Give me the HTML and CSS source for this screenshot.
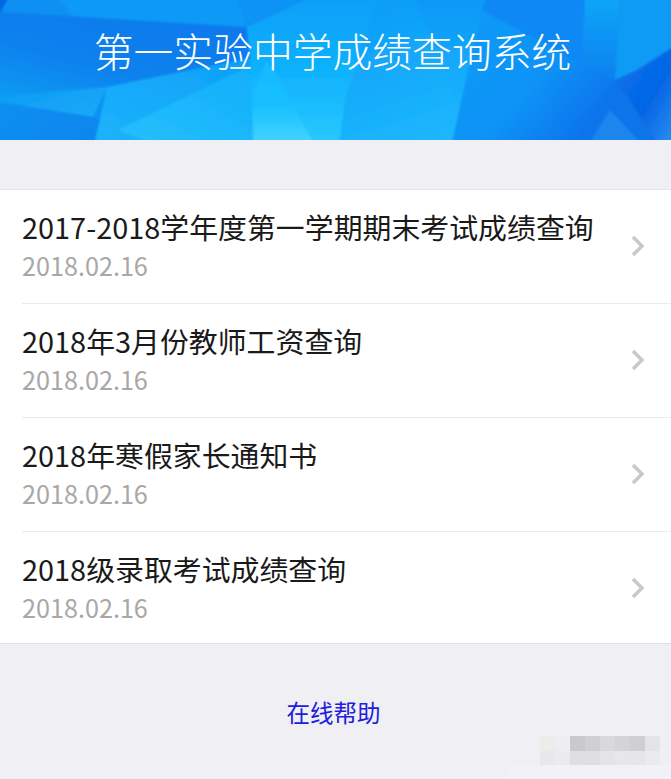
FILE: index.html
```html
<!DOCTYPE html>
<html lang="zh-CN">
<head>
<meta charset="utf-8">
<title>第一实验中学成绩查询系统</title>
<link rel="stylesheet" href="styles.css">
</head>
<body>
<header class="banner">
  <svg class="banner-art" viewBox="0 0 671 140" preserveAspectRatio="none" aria-hidden="true">
    <defs>
      <linearGradient id="base" x1="0" y1="0" x2="1" y2="0">
        <stop offset="0" stop-color="#0a86ee"/>
        <stop offset="0.45" stop-color="#0ea8fb"/>
        <stop offset="1" stop-color="#0670ea"/>
      </linearGradient>
      <linearGradient id="topband" x1="0" y1="0" x2="1" y2="0">
        <stop offset="0" stop-color="#0a90f2"/>
        <stop offset="1" stop-color="#0a93f5"/>
      </linearGradient>
      <linearGradient id="dark" x1="0.8" y1="0" x2="0" y2="1">
        <stop offset="0" stop-color="#0878ec"/>
        <stop offset="0.6" stop-color="#0a82ee"/>
        <stop offset="1" stop-color="#0b9af3"/>
      </linearGradient>
      <linearGradient id="leftlight" x1="0" y1="0" x2="1" y2="1">
        <stop offset="0" stop-color="#0d9cf5"/>
        <stop offset="1" stop-color="#18aaf8"/>
      </linearGradient>
      <linearGradient id="bottomleft" x1="0" y1="0" x2="1" y2="0.3">
        <stop offset="0" stop-color="#0f8ff0"/>
        <stop offset="1" stop-color="#1185ee"/>
      </linearGradient>
      <linearGradient id="mid" x1="1" y1="0" x2="0" y2="1">
        <stop offset="0" stop-color="#0d9ff8"/>
        <stop offset="1" stop-color="#1db3fb"/>
      </linearGradient>
      <linearGradient id="mid2" x1="1" y1="0" x2="0" y2="1">
        <stop offset="0" stop-color="#10aefb"/>
        <stop offset="1" stop-color="#27bffd"/>
      </linearGradient>
      <linearGradient id="centre" x1="0" y1="0" x2="0" y2="1">
        <stop offset="0" stop-color="#0e9ff8"/>
        <stop offset="0.6" stop-color="#12b6fd"/>
        <stop offset="1" stop-color="#2ac8ff"/>
      </linearGradient>
      <linearGradient id="glow" x1="0" y1="0" x2="0" y2="1">
        <stop offset="0" stop-color="#12b8ff"/>
        <stop offset="0.55" stop-color="#18c0ff"/>
        <stop offset="1" stop-color="#44d2ff"/>
      </linearGradient>
      <linearGradient id="wide" x1="0.2" y1="0" x2="0.5" y2="1">
        <stop offset="0" stop-color="#0c9cf8"/>
        <stop offset="1" stop-color="#1cb6fd"/>
      </linearGradient>
      <linearGradient id="strip" x1="0" y1="0" x2="0" y2="1">
        <stop offset="0" stop-color="#0b98f7"/>
        <stop offset="1" stop-color="#1fbcff"/>
      </linearGradient>
      <linearGradient id="rightmid" x1="0" y1="0" x2="1" y2="0.7">
        <stop offset="0" stop-color="#0d9bf8"/>
        <stop offset="0.6" stop-color="#0c93f6"/>
        <stop offset="1" stop-color="#0a72ec"/>
      </linearGradient>
      <linearGradient id="slim" x1="0" y1="0" x2="0" y2="1">
        <stop offset="0" stop-color="#0ea6f8"/>
        <stop offset="1" stop-color="#0a80f0"/>
      </linearGradient>
      <linearGradient id="deep" x1="0" y1="0" x2="1" y2="1">
        <stop offset="0" stop-color="#0872ec"/>
        <stop offset="0.6" stop-color="#0666e6"/>
        <stop offset="1" stop-color="#2a8ff0"/>
      </linearGradient>
      <filter id="soft" x="-2%" y="-2%" width="104%" height="104%"><feGaussianBlur stdDeviation="0.8"/></filter>
    </defs>
    <g filter="url(#soft)">
      <rect x="-2" y="-2" width="675" height="144" fill="url(#base)"/>
      <polygon points="-2,-2 250,-2 247,27 -2,12" fill="url(#topband)"/>
      <polygon points="60,-2 236,-2 247,27 72,16" fill="#0c9af6"/>
      <polygon points="-2,-2 8,-2 -2,18" fill="#0668e2"/>
      <polygon points="-2,12 247,27 250,58 107,87 -2,96" fill="url(#dark)"/>
      <polygon points="-2,96 107,87 93,117 -2,102" fill="url(#leftlight)"/>
      <polygon points="-2,102 93,117 150,142 -2,142" fill="url(#bottomleft)"/>
      <polygon points="107,87 250,58 253,142 95,142" fill="url(#mid)"/>
      <polygon points="118,130 250,66 253,142 148,142" fill="url(#mid2)"/>
      <polygon points="247,27 310,-2 380,-2 345,100 340,142 253,142 250,58" fill="url(#centre)"/>
      <polygon points="236,-2 310,-2 247,27" fill="#0c92f5"/>
      <polygon points="253,95 267,60 313,142 253,142" fill="url(#glow)"/>
      <polygon points="377,-2 415,-2 458,100 475,142 340,142 345,100" fill="url(#wide)"/>
      <polygon points="415,-2 487,-2 482,10 452,142 475,142 458,100" fill="url(#strip)"/>
      <polygon points="482,10 615,80 575,142 452,142" fill="url(#rightmid)"/>
      <polygon points="482,10 487,-2 585,-2 582,64" fill="#0a88f4"/>
      <polygon points="585,-2 620,-2 615,80 582,64" fill="url(#slim)"/>
      <polygon points="620,-2 673,-2 673,47 637,70 615,80" fill="#0d9bf6"/>
      <polygon points="637,70 673,47 673,142 657,142 615,80" fill="url(#deep)"/>
      <polygon points="575,142 615,80 657,142" fill="#0c74ea"/>
      <polygon points="590,142 610,110 640,142" fill="#1a86ee"/>
    </g>
  </svg>
  <h1 class="banner-title">第一实验中学成绩查询系统</h1>
</header>

<main class="content">
  <ul class="list">
    <li class="row">
      <div class="row-text">
        <p class="row-title">2017-2018学年度第一学期期末考试成绩查询</p>
        <p class="row-date">2018.02.16</p>
      </div>
      <svg class="chevron" viewBox="0 0 14 22" aria-hidden="true"><path d="M2 2 L11 11 L2 20"/></svg>
    </li>
    <li class="row">
      <div class="row-text">
        <p class="row-title">2018年3月份教师工资查询</p>
        <p class="row-date">2018.02.16</p>
      </div>
      <svg class="chevron" viewBox="0 0 14 22" aria-hidden="true"><path d="M2 2 L11 11 L2 20"/></svg>
    </li>
    <li class="row">
      <div class="row-text">
        <p class="row-title">2018年寒假家长通知书</p>
        <p class="row-date">2018.02.16</p>
      </div>
      <svg class="chevron" viewBox="0 0 14 22" aria-hidden="true"><path d="M2 2 L11 11 L2 20"/></svg>
    </li>
    <li class="row">
      <div class="row-text">
        <p class="row-title">2018级录取考试成绩查询</p>
        <p class="row-date">2018.02.16</p>
      </div>
      <svg class="chevron" viewBox="0 0 14 22" aria-hidden="true"><path d="M2 2 L11 11 L2 20"/></svg>
    </li>
  </ul>
  <a class="help" href="#">在线帮助</a>
</main>

<div class="watermark" aria-hidden="true">
  <i class="px p1"></i><i class="px p2"></i><i class="px p3"></i><i class="px p4"></i><i class="px p5"></i><i class="px p6"></i><i class="px p7"></i><i class="px p8"></i>
  <i class="px p9"></i><i class="px p10"></i><i class="px p11"></i><i class="px p12"></i><i class="px p13"></i><i class="px p14"></i><i class="px p15"></i><i class="px p16"></i>
</div>
<div class="watermark-strip" aria-hidden="true"></div>
</body>
</html>
```

FILE: styles.css
```css
* { box-sizing: border-box; }

html, body {
  margin: 0;
  height: 100%;
}

body {
  position: relative;
  background: #efeff4;
  font-family: "Noto Sans CJK SC", "Noto Sans", sans-serif;
  overflow: hidden;
}

.banner {
  position: relative;
  height: 140px;
  overflow: hidden;
  display: flex;
  justify-content: center;
  padding-top: 21px;
}

.banner-art {
  position: absolute;
  inset: 0;
  width: 100%;
  height: 100%;
}

.banner-title {
  position: relative;
  margin: 0;
  font-size: 39.8px;
  line-height: 58px;
  font-weight: 300;
  color: #fff;
  white-space: nowrap;
  transform: translateX(-3px);
}

.content {
  padding-top: 49px;
}

.list {
  list-style: none;
  margin: 0;
  padding: 0;
  background: #fff;
  border-top: 1px solid #e6e6ea;
  border-bottom: 1px solid #e0e0e4;
}

.row {
  position: relative;
  display: flex;
  align-items: flex-start;
  justify-content: space-between;
  height: 114px;
  padding: 17px 26px 0 22px;
}

.row:last-child {
  height: 111px;
}

.row + .row::before {
  content: "";
  position: absolute;
  top: -1px;
  left: 22px;
  right: 0;
  height: 1px;
  background: #ebebed;
}

.row-text {
  min-width: 0;
}

.row-title {
  margin: 0;
  font-size: 28.9px;
  line-height: 38px;
  color: #1a1a1a;
  white-space: nowrap;
}

.row-date {
  margin: 2px 0 0;
  font-size: 25.2px;
  line-height: 36px;
  color: #a8a8a8;
}

.chevron {
  flex: none;
  width: 14px;
  height: 22px;
  margin-top: 28px;
  fill: none;
  stroke: #c7c7cc;
  stroke-width: 3.4;
}

.help {
  display: block;
  margin-top: 49px;
  text-align: center;
  font-size: 23.5px;
  line-height: 38px;
  color: #2020dc;
  text-decoration: none;
  transform: translateX(-2px);
}

.watermark {
  position: absolute;
  left: 540px;
  top: 736px;
  display: grid;
  grid-template-columns: repeat(8, 15px);
  grid-auto-rows: 14.5px;
}

.watermark-strip {
  position: absolute;
  left: 507px;
  top: 765px;
  right: 0;
  height: 14px;
  background: #f2f2f6;
}

.p1 { background: #ecedeb; }
.p2 { background: #eeeef2; }
.p3 { background: #cacacc; }
.p4 { background: #d0d0d3; }
.p5 { background: #d9d9dc; }
.p6 { background: #d4d4d6; }
.p7 { background: #cfcfd1; }
.p8 { background: #e3e3e8; }
.p9 { background: #e8e8ea; }
.p10 { background: #ebebef; }
.p11 { background: #dfdfe2; }
.p12 { background: #dedee1; }
.p13 { background: #e4e4e8; }
.p14 { background: #e7e7eb; }
.p15 { background: #e6e6ea; }
.p16 { background: #ebebef; }
```
